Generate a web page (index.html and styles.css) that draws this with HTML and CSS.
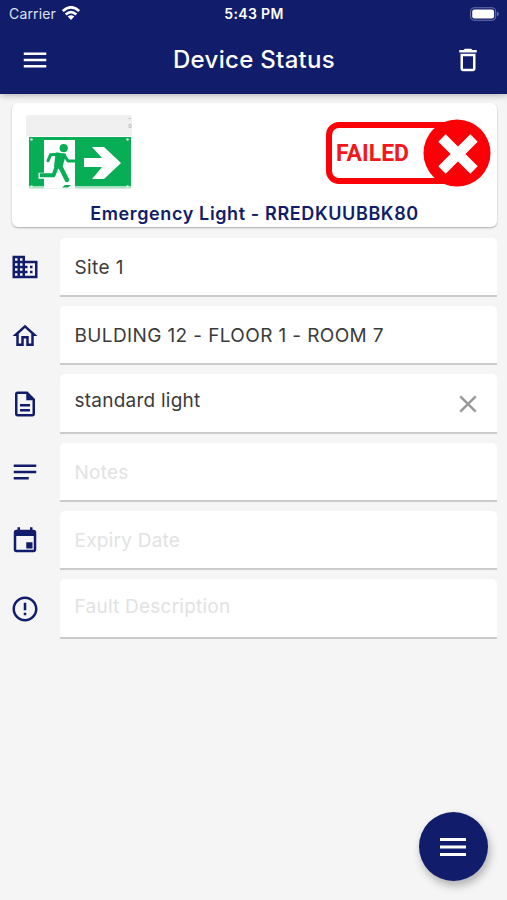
FILE: index.html
```html
<!DOCTYPE html>
<html lang="en">
<head>
<meta charset="utf-8">
<meta name="viewport" content="width=device-width, initial-scale=1">
<title>Device Status</title>
<link rel="stylesheet" href="styles.css">
</head>
<body>
<div class="app">
  <header class="header">
    <div class="statusbar">
      <div class="carrier"><span>Carrier</span>
        <svg class="wifi" viewBox="0 0 18 14"><g fill="none" stroke="#fff" stroke-width="2.7"><path d="M.8 5.1Q9-2.5 17.2 5.1M3.7 8.5Q9 3.6 14.3 8.5"/></g><path d="M5.7 10.6Q9 7.8 12.3 10.6L9 13.9z" fill="#fff"/></svg>
      </div>
      <time class="clock">5:43 PM</time>
      <svg class="battery" viewBox="0 0 30 14"><rect x=".6" y=".6" width="26" height="12.8" rx="4" fill="none" stroke="#6b73aa" stroke-width="1.1"/><rect x="2.3" y="2.3" width="22.6" height="9.4" rx="2.3" fill="#fff"/><path d="M28 4.7q1.8.6 1.8 2.3T28 9.3z" fill="#6b73aa"/></svg>
    </div>
    <div class="toolbar">
      <svg class="icon" viewBox="0 0 24 24"><path d="M3 18h18v-2H3v2zm0-5h18v-2H3v2zm0-7v2h18V6H3z"/></svg>
      <h1 class="title">Device Status</h1>
      <svg class="icon" viewBox="0 0 24 24"><path d="M6 19c0 1.1.9 2 2 2h8c1.1 0 2-.9 2-2V7H6v12zM8 9h8v10H8V9zm7.5-5l-1-1h-5l-1 1H5v2h14V4z"/></svg>
    </div>
  </header>
  <main class="content">
    <section class="card">
      <div class="card-top">
        <svg class="sign" viewBox="0 0 108 78">
          <path d="M3 1h101q2 0 2 3v18H0V4q0-3 3-3z" fill="#f0f0f0"/>
          <path d="M102.5 4.5h2.5M103 10.5h2v3h-2z" fill="none" stroke="#c4c4c4" stroke-width="1"/>
          <path d="M3 23h102v50H3z" fill="#08ae55"/>
          <path d="M3 72h102v2.500H3z" fill="#a9dfc2"/>
          <path d="M18 26h31v48.500H18z" fill="#fff"/>
          <g fill="#e6f7ed"><circle cx="5.5" cy="25.5" r="1.2"/><circle cx="101.5" cy="25.5" r="1.2"/><circle cx="5.5" cy="72.5" r="1.2"/><circle cx="101.5" cy="72.5" r="1.2"/></g>
          <circle cx="37.7" cy="34.2" r="4.1" fill="#08ae55"/>
          <path d="M30.5 39.5l8.5 1-4 14-6-2z" fill="#08ae55" stroke="#08ae55" stroke-width="2" stroke-linejoin="round"/>
          <g fill="none" stroke="#08ae55" stroke-linejoin="round" stroke-linecap="round"><path d="M32 40.2l-7.5.6-2.5 6M38.5 41.5l3.5 5.5h7" stroke-width="3"/><path d="M34.5 53l6.5 13" stroke-width="4.5"/></g>
          <path d="M28.500 58l-2 3.700H12.500" fill="none" stroke="#fff" stroke-width="6" stroke-linejoin="round"/>
          <path d="M31 52l-3.500 9.200H14" fill="none" stroke="#08ae55" stroke-width="4" stroke-linejoin="round"/>
          <path d="M36 73.500l3-2.500h6l-3 2.500z" fill="#08ae55"/>
          <path d="M58 44h18L66 33h12l17 16-17 16H66l10-12H58z" fill="#fff"/>
        </svg>
        <div class="failed"><span>FAILED</span>
          <svg class="cross" viewBox="0 0 68 68"><circle cx="34" cy="34" r="33.5" fill="#fb0006"/><path d="M18 18l32 32M50 18L18 50" transform="translate(1 1)" stroke="#fff" stroke-width="10.5"/></svg>
        </div>
      </div>
      <h2 class="device">Emergency Light - RREDKUUBBK80</h2>
    </section>
    <div class="row">
      <svg class="icon" viewBox="0 0 24 24"><path d="M12 7V3H2v18h20V7H12zM6 19H4v-2h2v2zm0-4H4v-2h2v2zm0-4H4V9h2v2zm0-4H4V5h2v2zm4 12H8v-2h2v2zm0-4H8v-2h2v2zm0-4H8V9h2v2zm0-4H8V5h2v2zm10 12h-8v-2h2v-2h-2v-2h2v-2h-2V9h8v10zm-2-8h-2v2h2v-2zm0 4h-2v2h2v-2z"/></svg>
      <div class="field"><span class="site">Site 1</span></div>
    </div>
    <div class="row">
      <svg class="icon" viewBox="0 0 24 24"><path d="M12 5.69l5 4.5V18h-2v-6H9v6H7v-7.81l5-4.5M12 3L2 12h3v8h6v-6h2v6h6v-8h3L12 3z"/></svg>
      <div class="field"><span class="building">BULDING 12 - FLOOR 1 - ROOM 7</span></div>
    </div>
    <div class="row">
      <svg class="icon" viewBox="0 0 24 24"><path d="M8 16h8v2H8zm0-4h8v2H8zm6-10H6c-1.1 0-2 .9-2 2v16c0 1.1.89 2 1.99 2H18c1.1 0 2-.9 2-2V8l-6-6zm4 18H6V4h7v5h5v11z"/></svg>
      <div class="field raised"><span>standard light</span>
        <svg class="clear" viewBox="0 0 18 18"><path d="M1.3 1.3l15.4 15.4M16.7 1.3L1.3 16.7" stroke="#999" stroke-width="2.5"/></svg>
      </div>
    </div>
    <div class="row">
      <svg class="icon" viewBox="0 0 24 24"><path d="M3 18h12v-2H3v2zM3 6v2h18V6H3zm0 7h18v-2H3v2z"/></svg>
      <div class="field empty"><span>Notes</span></div>
    </div>
    <div class="row">
      <svg class="icon" viewBox="0 0 24 24"><path d="M18 13h-5v5h5v-5zM16 1v2H8V1H6v2H5c-1.11 0-1.99.9-1.99 2L3 19c0 1.1.89 2 2 2h14c1.1 0 2-.9 2-2V5c0-1.1-.9-2-2-2h-1V1h-2zm3 18H5V8h14v11z"/></svg>
      <div class="field empty"><span>Expiry Date</span></div>
    </div>
    <div class="row">
      <svg class="icon" viewBox="0 0 24 24"><path d="M11 15h2v2h-2zm0-8h2v6h-2zm.99-5C6.47 2 2 6.48 2 12s4.47 10 9.99 10C17.52 22 22 17.52 22 12S17.52 2 11.99 2zM12 20c-4.42 0-8-3.58-8-8s3.58-8 8-8 8 3.58 8 8-3.58 8-8 8z"/></svg>
      <div class="field empty raised"><span>Fault Description</span></div>
    </div>
  </main>
  <div class="fab"><svg viewBox="0 0 26 18"><path d="M0 0h26v3H0zm0 7.5h26v3H0zM0 15h26v3H0z"/></svg></div>
</div>
</body>
</html>
```
FILE: styles.css
```css
* { box-sizing: border-box; }
body { margin: 0; background: #f5f5f5; font-family: Inter, "Liberation Sans", sans-serif; }
svg { display: block; flex: none; }
.app { height: 900px; overflow: hidden; }
.header { height: 94px; background: #111d6b; color: #fff; box-shadow: 0 1px 7px rgba(0,0,0,.3); }
.statusbar { height: 27px; padding: 0 8px 0 9px; display: grid; grid-template-columns: 1fr auto 1fr; align-items: center; font-size: 14px; }
.carrier { display: flex; align-items: center; gap: 6px; color: #dfe1ef; letter-spacing: .15px; }
.wifi { width: 18px; height: 14px; margin-top: -1px; }
.clock { font-weight: 600; font-size: 14px; letter-spacing: .35px; }
.battery { width: 29px; height: 14px; justify-self: end; }
.icon { width: 30px; height: 30px; fill: #111d6b; }
.toolbar { height: 66px; padding: 0 24px 0 20px; display: flex; align-items: center; justify-content: space-between; }
.toolbar .icon { fill: #fff; }
.title { margin: 0 0 0 5px; font-size: 24px; line-height: 30px; font-weight: 500; letter-spacing: .3px; white-space: nowrap; }
.content { padding: 9px 10px 0 12px; }
.card { height: 124px; background: #fff; border-radius: 6px; box-shadow: 0 1px 2px rgba(0,0,0,.3); margin-bottom: 10.5px; overflow: hidden; }
.card-top { height: 98px; display: flex; justify-content: space-between; padding: 11px 6px 0 14px; }
.sign { width: 108px; height: 78px; }
.failed { width: 131px; height: 62px; margin-top: 8px; margin-right: 34px; border: 6.5px solid #fb0006; border-radius: 13px; display: flex; align-items: center; position: relative; padding-left: 4px; font: 700 23px Roboto, sans-serif; color: #f3181b; }
.cross { position: absolute; width: 68px; height: 68px; left: 91px; top: -9.5px; }
.device { margin: 0; text-align: center; color: #111d6b; font-size: 18px; line-height: 26px; font-weight: 600; letter-spacing: .62px; white-space: nowrap; }
.row { display: grid; grid-template-columns: 48px 1fr; align-items: center; height: 59.4px; margin-bottom: 9px; }
.row .icon { margin-left: -2px; }
.field { height: 100%; background: #fff; border-bottom: 2px solid #cbcbcb; border-radius: 5px 5px 0 0; padding: 0 20px 0 14.5px; display: flex; align-items: center; justify-content: space-between; font-size: 19px; color: #3b3b3b; letter-spacing: .24px; white-space: nowrap; }
.field > span { margin-top: 2px; }
.raised > span { margin-top: -4px; }
.field .building { letter-spacing: .38px; }
.field .site { letter-spacing: .4px; }
.empty { color: #e2e2e2; }
.clear { width: 18px; height: 18px; margin-top: 2px; }
.fab { position: absolute; left: 419px; top: 812px; width: 69px; height: 69px; border-radius: 50%; background: #111d6b; display: flex; align-items: center; justify-content: center; box-shadow: 2px 5px 9px rgba(0,0,0,.28); }
.fab svg { width: 26px; height: 18px; fill: #fff; margin-left: -2px; }
```
